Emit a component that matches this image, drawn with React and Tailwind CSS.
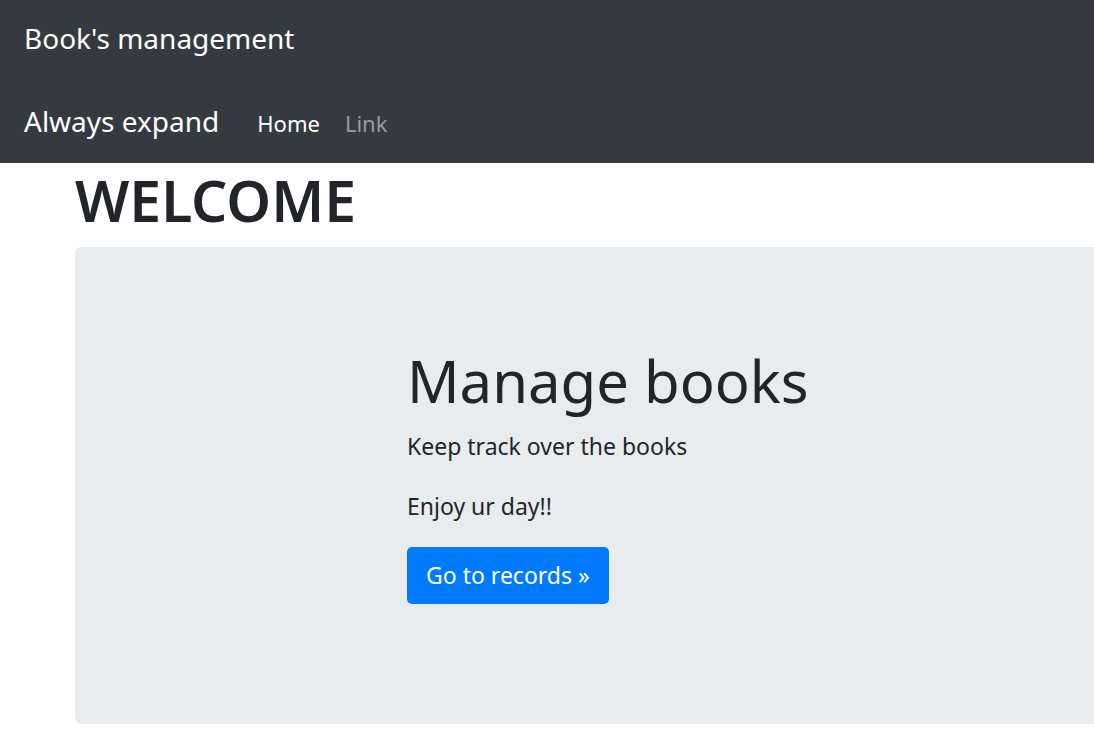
export default function App() {
  const font = { fontFamily: '"Noto Sans", "Open Sans", sans-serif' };
  return (
    <div className="min-h-screen bg-white overflow-hidden text-[#212529]" style={font}>
      <nav className="h-[81px] bg-[#343a40] flex items-start pt-[24px] px-[24px]">
        <span className="text-[28px] leading-[28px] text-white">Book's management</span>
      </nav>
      <nav className="h-[82px] bg-[#343a40] flex items-baseline pt-[26px] px-[24px]">
        <span className="text-[28px] leading-[28px] text-white">Always expand</span>
        <div className="flex items-baseline ml-[38px] gap-[25px] text-[22px] leading-[22px]">
          <a className="text-white">Home</a>
          <a className="text-[#9a9da0]">Link</a>
        </div>
      </nav>

      <main className="pl-[75px]">
        <h1 className="mt-[2px] mb-[12px] text-[57px] leading-[70px] h-[70px] font-semibold">WELCOME</h1>
        <div className="w-[1060px] bg-[#e9ecef] rounded-[6px] pl-[332px] pt-[99px] pb-[120px]">
          <h2 className="text-[58px] leading-[70px] h-[70px] font-normal">Manage books</h2>
          <p className="mt-[13px] text-[23px] leading-[35px]">Keep track over the books</p>
          <p className="mt-[25px] text-[23px] leading-[35px]">Enjoy ur day!!</p>
          <button className="mt-[23px] h-[57px] px-[19px] bg-[#007bff] text-white text-[23px] leading-none rounded-[5px]">
            Go to records &raquo;
          </button>
        </div>
      </main>
    </div>
  );
}
